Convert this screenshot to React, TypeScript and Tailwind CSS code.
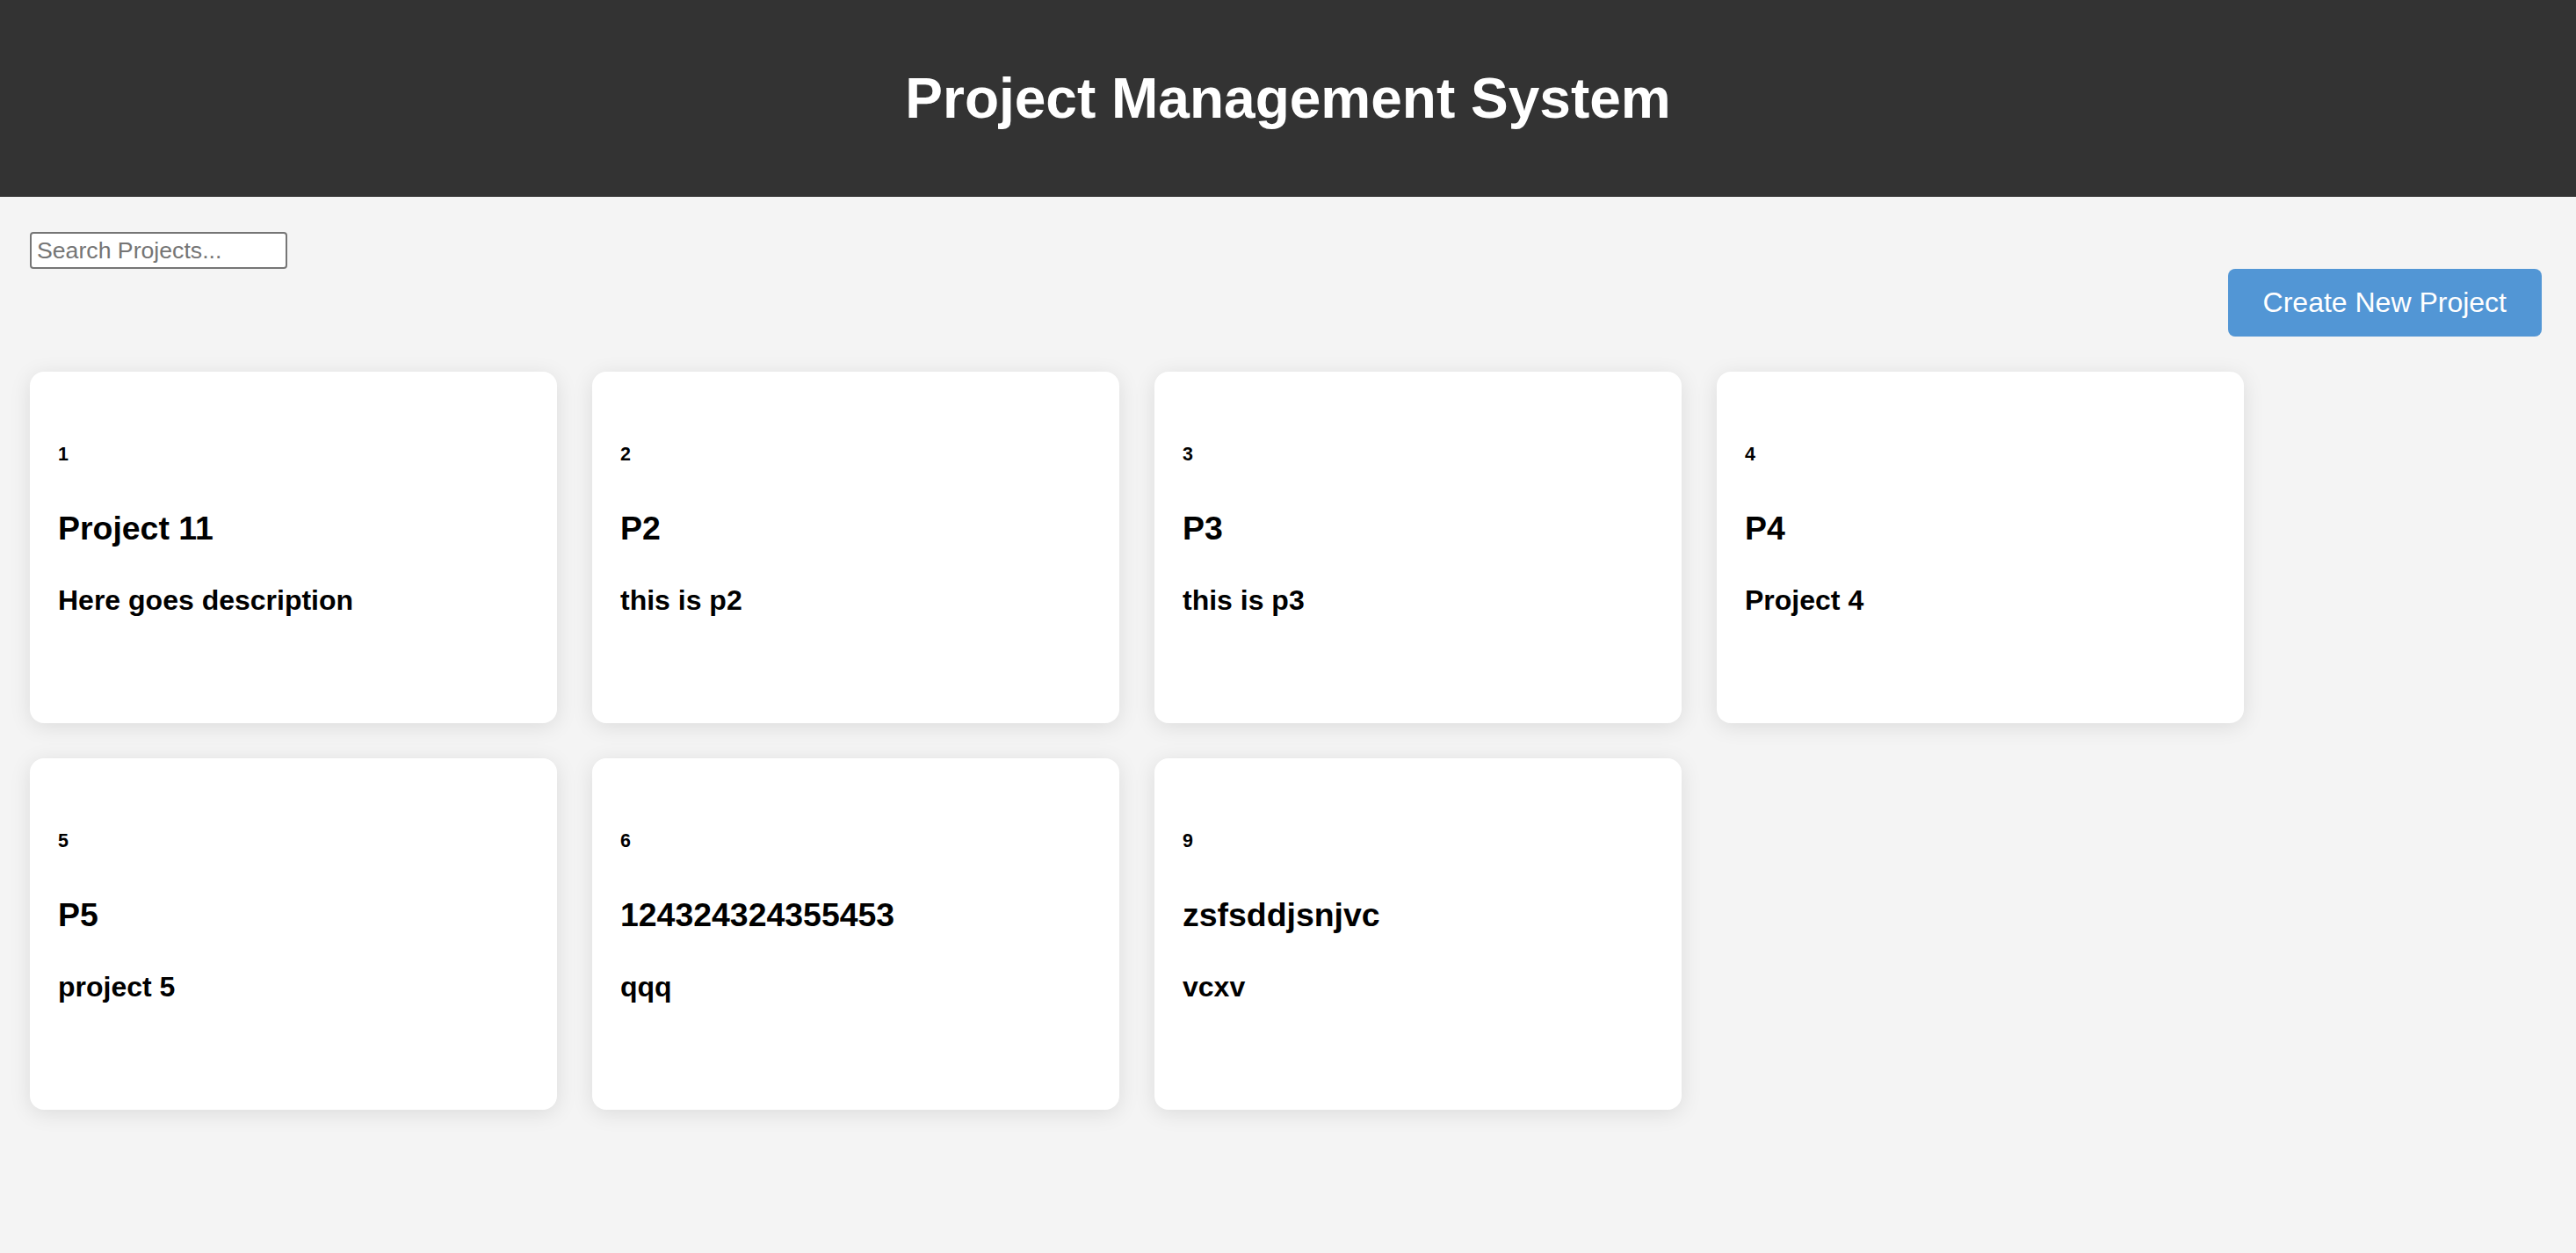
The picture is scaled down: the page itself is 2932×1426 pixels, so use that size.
import React, { useState } from "react";

type Project = { id: number; name: string; description: string };

const projects: Project[] = [
  { id: 1, name: "Project 11", description: "Here goes description" },
  { id: 2, name: "P2", description: "this is p2" },
  { id: 3, name: "P3", description: "this is p3" },
  { id: 4, name: "P4", description: "Project 4" },
  { id: 5, name: "P5", description: "project 5" },
  { id: 6, name: "124324324355453", description: "qqq" },
  { id: 9, name: "zsfsddjsnjvc", description: "vcxv" },
];

function ProjectCard({ project }: { project: Project }) {
  return (
    <div className="h-[400px] w-[600px] rounded-[16px] bg-white p-[32px] shadow-[0_4px_24px_rgba(0,0,0,0.1)]">
      <h6 className="mt-[50px] text-[21.44px] font-bold leading-[24.6px]">{project.id}</h6>
      <h3 className="mt-[50px] text-[37.44px] font-bold leading-[43px]">{project.name}</h3>
      <h4 className="mt-[42.56px] text-[32px] font-bold leading-[36.8px]">{project.description}</h4>
    </div>
  );
}

export default function App() {
  const [search, setSearch] = useState("");

  const filtered = projects.filter(p =>
    p.name.toLowerCase().includes(search.toLowerCase())
  );

  return (
    <div className="min-h-screen bg-[#f4f4f4] font-['Liberation_Sans',Arial,sans-serif] text-black">
      {/* Header */}
      <header className="bg-[#333333] py-[32px] text-center text-white">
        <h1 className="my-[43px] text-[64px] font-bold leading-[74px]">Project Management System</h1>
      </header>

      <main className="pl-[34px] pr-[39px] pt-[40px]">
        <input
          type="text"
          placeholder="Search Projects..."
          value={search}
          onChange={e => setSearch(e.target.value)}
          className="block h-[42px] w-[293px] rounded-[4px] border-2 border-[#767676] bg-white px-[6px] text-[26.67px] outline-none placeholder:text-[#757575]"
        />
        <div className="flex justify-end">
          <button className="rounded-[8px] bg-[#5296d5] px-[40px] py-[20px] text-[32px] leading-[37px] text-white">
            Create New Project
          </button>
        </div>

        {/* Project list */}
        <div className="mt-[40px] flex flex-wrap gap-[40px]">
          {filtered.map(project => (
            <ProjectCard key={project.id} project={project} />
          ))}
        </div>
      </main>
    </div>
  );
}
